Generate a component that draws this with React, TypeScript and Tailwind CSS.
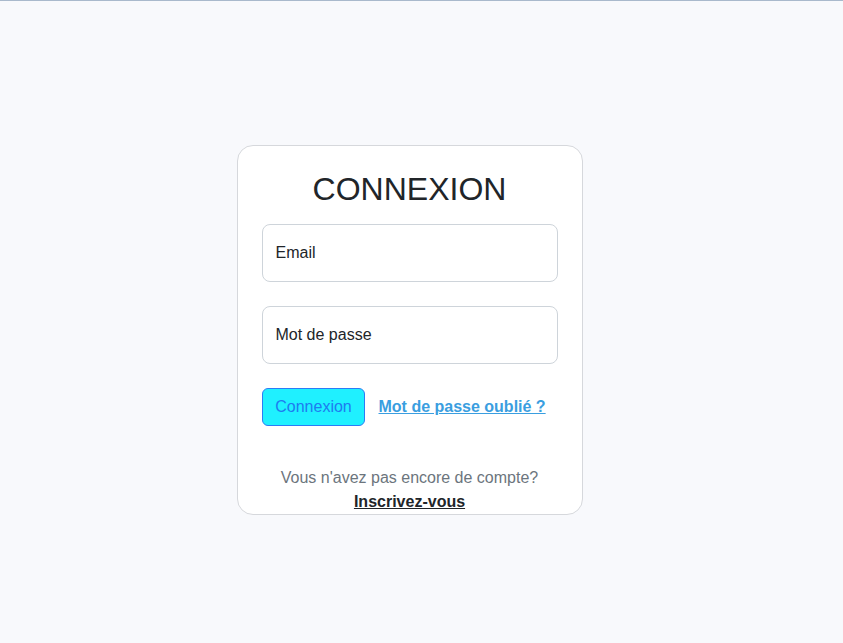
import React from 'react';

const App = () => {
  return (
    <div
      className="min-h-[643px] bg-[#f8f9fc] border-t border-[#a9b9cc] flex justify-center pr-6 pt-[144px]"
      style={{ fontFamily: '"Liberation Sans", Arial, sans-serif' }}
    >
      <div className="w-[346px] h-[370px] bg-white border border-[#d6d8dc] rounded-[16px] px-6 pt-6">
        <h1 className="text-[32px] leading-[38px] text-[#212529] text-center">CONNEXION</h1>

        <form className="mt-4 flex flex-col" onSubmit={(e) => e.preventDefault()}>
          <input
            type="email"
            placeholder="Email"
            className="h-[58px] w-full rounded-lg border border-[#ced4da] bg-white px-[13px] text-base text-[#212529] placeholder:text-[#212529] outline-none"
          />
          <input
            type="password"
            placeholder="Mot de passe"
            className="mt-6 h-[58px] w-full rounded-lg border border-[#ced4da] bg-white px-[13px] text-base text-[#212529] placeholder:text-[#212529] outline-none"
          />

          <div className="mt-6 flex items-center">
            <button
              type="submit"
              className="h-[38px] w-[103px] pl-px rounded-md border border-[#2b7cf5] bg-[#1ff0ff] text-base text-[#1e7bf0]"
            >
              Connexion
            </button>
            <a href="#" className="ml-[14px] text-base font-bold text-[#3a9ee0] underline">
              Mot de passe oublié ?
            </a>
          </div>
        </form>

        <div className="mt-[40px] text-center text-base leading-6">
          <p className="text-[#6c757d]">Vous n'avez pas encore de compte?</p>
          <a href="#" className="font-bold text-[#212529] underline">
            Inscrivez-vous
          </a>
        </div>
      </div>
    </div>
  );
};

export default App;
